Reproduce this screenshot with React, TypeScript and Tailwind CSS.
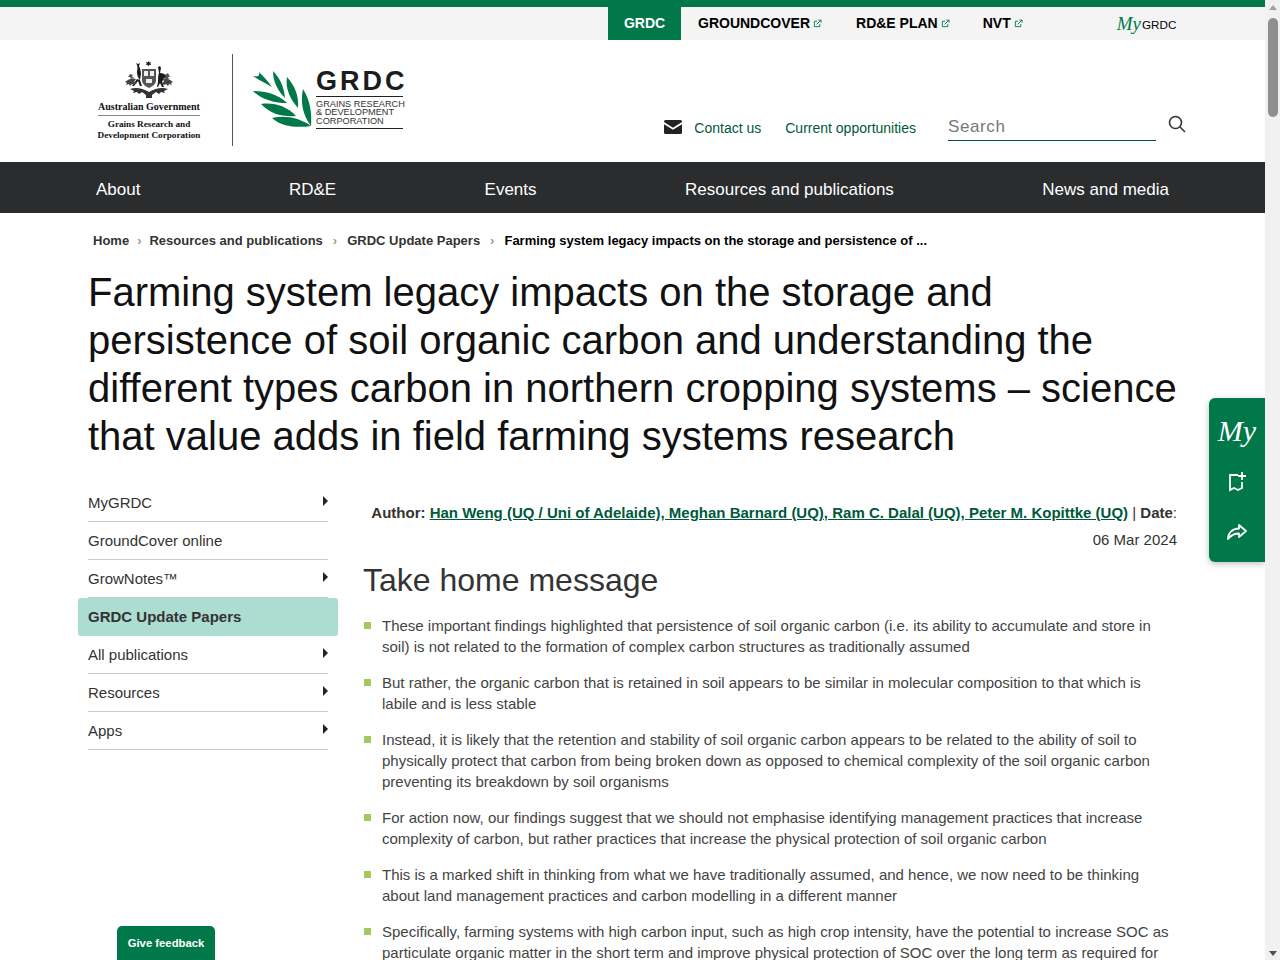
const sideItems = [
  { label: "MyGRDC", arrow: true },
  { label: "GroundCover online", arrow: false },
  { label: "GrowNotes™", arrow: true },
  { label: "GRDC Update Papers", arrow: false, active: true },
  { label: "All publications", arrow: true },
  { label: "Resources", arrow: true },
  { label: "Apps", arrow: true },
];

const messages = [
  "These important findings highlighted that persistence of soil organic carbon (i.e. its ability to accumulate and store in soil) is not related to the formation of complex carbon structures as traditionally assumed",
  "But rather, the organic carbon that is retained in soil appears to be similar in molecular composition to that which is labile and is less stable",
  "Instead, it is likely that the retention and stability of soil organic carbon appears to be related to the ability of soil to physically protect that carbon from being broken down as opposed to chemical complexity of the soil organic carbon preventing its breakdown by soil organisms",
  "For action now, our findings suggest that we should not emphasise identifying management practices that increase complexity of carbon, but rather practices that increase the physical protection of soil organic carbon",
  "This is a marked shift in thinking from what we have traditionally assumed, and hence, we now need to be thinking about land management practices and carbon modelling in a different manner",
  "Specifically, farming systems with high carbon input, such as high crop intensity, have the potential to increase SOC as particulate organic matter in the short term and improve physical protection of SOC over the long term as required for",
];

function ExternalIcon() {
  return (
    <svg viewBox="0 0 10 10" className="ml-[3px] inline-block h-[9px] w-[9px]" fill="none" stroke="#00784a" strokeWidth="1">
      <path d="M7.5 5.5v3h-6v-6h3" />
      <path d="M4 6l4.5-4.5M6 1.2h3v3" />
    </svg>
  );
}

function Crest() {
  return (
    <svg viewBox="0 0 54 40" className="h-[40px] w-[54px]" fill="#1c1c1c">
      <path d="M26.5 1l1 1.4 1.7-.3-.9 1.5.9 1.5-1.7-.3-1 1.4-1-1.4-1.7.3.9-1.5-.9-1.5 1.7.3z" />
      <path d="M20 9h14v11c0 4-3 6-7 8-4-2-7-4-7-8z" fill="#555" />
      <path d="M22 11h4v5h-4zM28 11h4v5h-4zM24 19h6v4h-6z" fill="#eee" />
      <path d="M18 20c-2-2-3-5-3-8 0-2 1-4 0-7l-1-2 2 1 2-1-1 3c1 2 2 5 2 8l-1 6 2 6-2 0-2-5-4 5-2 0 5-7z" />
      <path d="M36 22c0-4 0-7 1-9l-1-6 2-1 1 2-1 5c3 0 7 2 9 6l-5-1-2 4 2 5-2 0-2-4-2 4-1 0z" />
      <path d="M3 22c3-3 7-4 11-3l-2 3 3 1-3 2-2-1-2 2-1-2-3 1 1-2zM51 22c-3-3-7-4-10-3l1 3-3 1 3 2 2-1 2 2 1-2 3 1-1-2z" fill="#444" />
      <path d="M8 14l3 1-1 2 3 1-4 1-1-2-2 0zM46 13l-3 2 1 2-3 1 4 1 1-2 2 0z" fill="#555" />
      <path d="M8 29c6-2 12-1 19 3 7-4 13-5 19-3l-4 2 1 2-4-1-2 2-3-2-4 3 0 3-6 0 0-3-4-3-3 2-2-2-4 1 1-2z" fill="#333" />
    </svg>
  );
}

function Leaves() {
  return (
    <svg viewBox="5 6 60 60" className="h-[60px] w-[60px]" fill="#00784a">
      <path d="M5 12c5 1 7 0 6-4 4 4 9 9 13 15-6-4-13-7-19-11z" />
      <path d="M25 7c7 7 11 16 12 27-7-7-12-16-12-27z" />
      <path d="M39 13c8 9 12 19 11 31-8-9-13-20-11-31z" />
      <path d="M5 27c12 0 25 3 34 12-12 0-25-3-34-12z" />
      <path d="M13 40c12-2 26 2 35 12-13 1-26-2-35-12z" />
      <path d="M55 25c7 11 9 24 8 37-8-10-11-24-8-37z" />
      <path d="M24 54c13-3 28 0 39 8-14 2-29 1-39-8z" />
    </svg>
  );
}

function MyMark({ className }: { className: string }) {
  return <span className={`font-['Liberation_Serif',serif] italic ${className}`}>My</span>;
}

export default function App() {
  return (
    <div className="flex h-[960px] w-full overflow-hidden bg-white font-['Liberation_Sans',Arial,sans-serif] text-[#444]">
      <div className="relative h-[960px] w-[1265px] shrink-0 overflow-hidden">
        <div className="h-[7px] bg-[#00784a]" />
        <div className="flex h-[33px] items-stretch bg-[#f4f4f4] pl-[608px] text-[14px] font-bold text-black">
          <a className="flex w-[73px] items-center justify-center bg-[#00784a] text-white">GRDC</a>
          <a className="ml-[17px] flex items-center">GROUNDCOVER<ExternalIcon /></a>
          <a className="ml-[34px] flex items-center">RD&amp;E PLAN<ExternalIcon /></a>
          <a className="ml-[33px] flex items-center">NVT<ExternalIcon /></a>
          <a className="ml-[94px] flex items-center font-normal text-[11.700px]">
            <MyMark className="text-[19px] leading-none text-[#00784a]" />
            <span className="ml-[1px] mt-[2px]">GRDC</span>
          </a>
        </div>

        <header className="flex h-[122px] pl-[88px] pr-[78px]">
          <div className="mt-[14px] flex h-[92px] items-stretch">
            <div className="flex w-[122px] flex-col items-center pt-[6px] font-['Liberation_Serif',serif] font-bold text-[#111]">
              <Crest />
              <div className="mt-[1px] whitespace-nowrap text-[10px] leading-[12px]">Australian Government</div>
              <div className="mb-[3px] mt-[2px] h-px w-[102px] bg-[#888]" />
              <div className="whitespace-nowrap text-[9.200px] leading-[11px]">Grains Research and</div>
              <div className="whitespace-nowrap text-[9.200px] leading-[11px]">Development Corporation</div>
            </div>
            <div className="ml-[22px] w-px bg-[#555]" />
            <div className="ml-[20px] flex items-center">
              <Leaves />
              <div className="ml-[3px] mt-[-4px] w-[87px]">
                <div className="text-[27px] font-bold leading-[29px] tracking-[3px] text-[#1c1c1c]">GRDC</div>
                <div className="whitespace-nowrap border-y border-[#222] py-[3px] text-[9.200px] leading-[8.500px] text-[#333]">
                  GRAINS RESEARCH<br />&amp; DEVELOPMENT<br />CORPORATION
                </div>
              </div>
            </div>
          </div>
          <div className="ml-auto mt-[73px] flex h-[28px] items-start text-[14px] text-[#00593a]">
            <svg viewBox="0 0 18 14" className="mt-[7px] h-[14px] w-[18px]" fill="#222">
              <path d="M1.5 0h15A1.5 1.5 0 0 1 18 1.5v.6l-9 5.6L0 2.1v-.6A1.5 1.5 0 0 1 1.5 0z" />
              <path d="M0 4.2l9 5.6 9-5.6v8.3a1.5 1.5 0 0 1-1.500 1.500h-15A1.500 1.500 0 0 1 0 12.500z" />
            </svg>
            <a className="ml-[12px] mt-[6px] leading-[18px]">Contact us</a>
            <a className="ml-[24px] mt-[6px] leading-[18px]">Current opportunities</a>
            <div className="ml-[32px] h-[28px] w-[208px] border-b border-[#00593a] text-[17px] leading-[28px] tracking-[0.6px] text-[#777]">Search</div>
            <svg viewBox="0 0 20 20" className="ml-[11px] mt-[1px] h-[20px] w-[20px]" fill="none" stroke="#333" strokeWidth="1.600">
              <circle cx="8.500" cy="8.500" r="6" />
              <path d="M13 13l5 5" />
            </svg>
          </div>
        </header>

        <nav className="flex h-[51px] items-center justify-between bg-[#2a2c2e] px-[96px] pt-[4px] text-[17px] text-white">
          <a>About</a>
          <a>RD&amp;E</a>
          <a>Events</a>
          <a>Resources and publications</a>
          <a>News and media</a>
        </nav>

        <div className="flex h-[55px] items-center pl-[93px] text-[13px] font-bold text-[#333]">
          <a>Home</a>
          <span className="mx-[8px] text-[#999]">›</span>
          <a>Resources and publications</a>
          <span className="mx-[10px] text-[#999]">›</span>
          <a>GRDC Update Papers</a>
          <span className="mx-[10px] text-[#999]">›</span>
          <a className="text-black">Farming system legacy impacts on the storage and persistence of ...</a>
        </div>

        <h1 className="w-[1177px] pl-[88px] text-[40px] font-normal leading-[48px] text-[#111]">
          Farming system legacy impacts on the storage and persistence of soil organic carbon and understanding the different types carbon in northern cropping systems – science that value adds in field farming systems research
        </h1>

        <div className="mt-[24px] flex pl-[78px]">
          <aside className="w-[260px] shrink-0 text-[15px] text-[#333]">
            {sideItems.map((item) => (
              <div
                key={item.label}
                className={
                  item.active
                    ? "flex h-[38px] items-center rounded-[3px] bg-[#addcd1] px-[10px] pt-[1px] font-bold"
                    : "mx-[10px] flex h-[38px] items-center justify-between border-b border-[#c8c8c8] pt-[2px]"
                }
              >
                <span>{item.label}</span>
                {item.arrow && <span className="mb-[6px] h-0 w-0 border-y-[5px] border-l-[5px] border-y-transparent border-l-[#222]" />}
              </div>
            ))}
          </aside>

          <main className="ml-[25px] w-[814px] pt-[15px]">
            <p className="text-right text-[15px] leading-[27px] text-[#333]">
              <b>Author: </b>
              <a className="font-bold text-[#00593a] underline">Han Weng (UQ / Uni of Adelaide), Meghan Barnard (UQ), Ram C. Dalal (UQ), Peter M. Kopittke (UQ)</a>
              {" | "}
              <b>Date</b>: <br />06 Mar 2024
            </p>
            <h2 className="mt-[7px] text-[32px] font-normal leading-[40px] text-[#333]">Take home message</h2>
            <ul className="mt-[15px] flex flex-col gap-[15px] text-[15px] leading-[21px]">
              {messages.map((text) => (
                <li key={text} className="relative pl-[19px]">
                  <span className="absolute left-[1px] top-[7px] h-[7px] w-[7px] bg-[#a5c958]" />
                  {text}
                </li>
              ))}
            </ul>
          </main>
        </div>

        <div className="absolute bottom-0 left-[117px] flex h-[34px] w-[98px] items-center justify-center rounded-t-[5px] bg-[#00784a] text-[11.300px] font-bold text-white">
          Give feedback
        </div>

        <div className="absolute right-0 top-[398px] flex h-[164px] w-[56px] flex-col items-center rounded-l-[6px] bg-[#00784a] text-white shadow-[0_2px_6px_rgba(0,0,0,0.25)]">
          <MyMark className="mt-[13px] text-[30px] leading-[40px]" />
          <svg viewBox="0 0 20 22" className="mt-[20px] h-[22px] w-[20px]" fill="none" stroke="#fff" strokeWidth="1.800">
            <path d="M11 4H3v15l4-2 4 2 4-2V11" />
            <path d="M15 1v8M11 5h8" />
          </svg>
          <svg viewBox="0 0 22 18" className="mt-[30px] h-[18px] w-[22px]" fill="none" stroke="#fff" strokeWidth="1.800" strokeLinejoin="round">
            <path d="M13 2l7 6-7 6v-3.500C8 10.500 5 12 2 16c0-6 4-10 11-10.500z" />
          </svg>
        </div>
      </div>

      <div className="flex h-[960px] w-[15px] shrink-0 flex-col items-center bg-[#f1f1f1]">
        <div className="mt-[5px] h-0 w-0 border-x-[4px] border-b-[5px] border-x-transparent border-b-[#a3a3a3]" />
        <div className="mt-[8px] h-[99px] w-[10px] rounded-[5px] bg-[#8f8f8f]" />
        <div className="mb-[4px] mt-auto h-0 w-0 border-x-[4px] border-t-[5px] border-x-transparent border-t-[#505050]" />
      </div>
    </div>
  );
}
